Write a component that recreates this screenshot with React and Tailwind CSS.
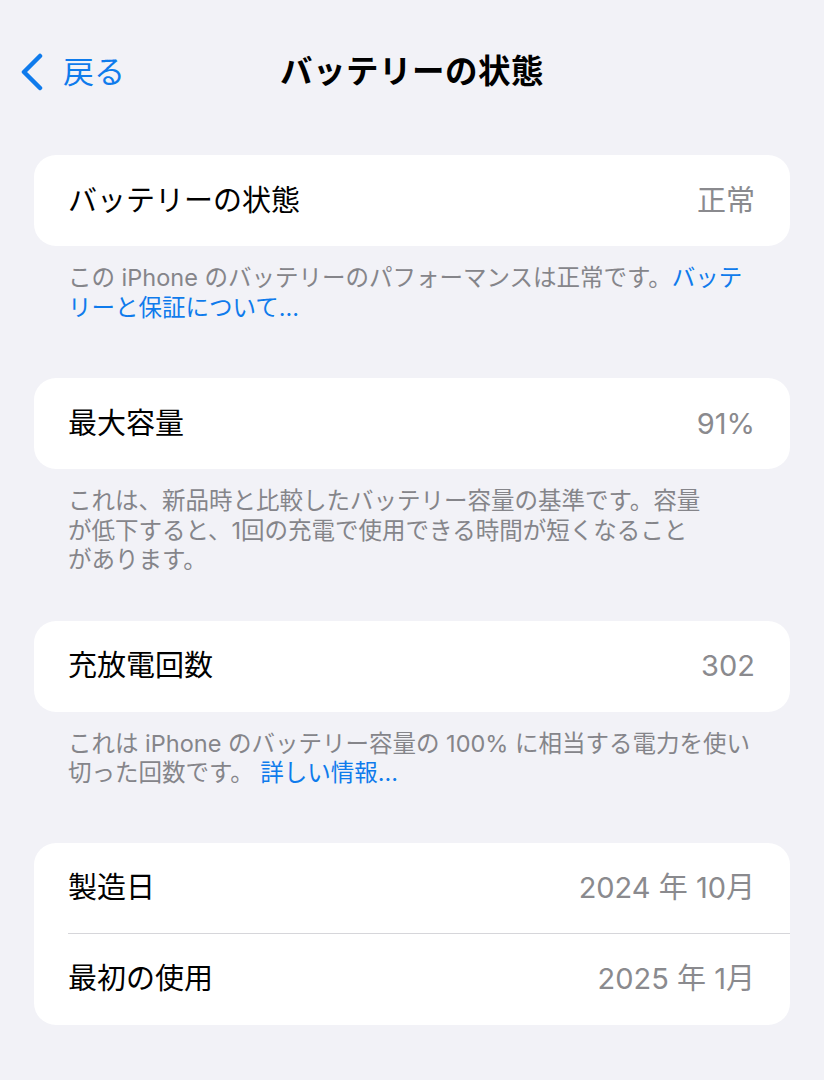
const FONT = "font-['Inter','Noto_Sans_CJK_JP',sans-serif]";

function Row({ label, value, divider }) {
  return (
    <div className="relative flex h-[91px] items-center justify-between pl-[34px] pr-[35px]">
      <span className="text-[29px] text-black">{label}</span>
      <span className="text-[29px] text-[#8a8a8e]">{value}</span>
      {divider && <div className="absolute bottom-0 left-[34px] right-0 h-px bg-[#d6d6da]" />}
    </div>
  );
}

function Footer({ children }) {
  return (
    <div className="pl-[34px] pt-[17px] text-[23.5px] leading-[29.5px] text-[#85858a] whitespace-nowrap">
      {children}
    </div>
  );
}

export default function App() {
  return (
    <div className={`min-h-[1080px] w-[824px] bg-[#f2f2f7] pt-[40px] ${FONT}`}>
      {/* nav bar */}
      <div className="relative flex h-[64px] items-center">
        <div className="flex items-center pl-[18px] text-[#0f7bec]">
          <svg width="26" height="38" viewBox="0 0 26 38" fill="none">
            <path d="M22 3 L6 19 L22 35" stroke="currentColor" strokeWidth="4.5" strokeLinecap="round" strokeLinejoin="round" />
          </svg>
          <span className="ml-[19px] text-[31px]">戻る</span>
        </div>
        <div className="absolute inset-0 flex items-center justify-center pointer-events-none">
          <span className="text-[32.5px] font-bold text-black tracking-[0.5px]">バッテリーの状態</span>
        </div>
      </div>

      <div className="px-[34px] pt-[51px]">
        <div className="rounded-[22px] bg-white">
          <Row label="バッテリーの状態" value="正常" />
        </div>
        <Footer>
          この iPhone のバッテリーのパフォーマンスは正常です。<span className="text-[#0f7bec]">バッテ</span>
          <br />
          <span className="text-[#0f7bec]">リーと保証について...</span>
        </Footer>

        <div className="mt-[56px] rounded-[22px] bg-white">
          <Row label="最大容量" value="91%" />
        </div>
        <Footer>
          これは、新品時と比較したバッテリー容量の基準です。容量
          <br />
          が低下すると、1回の充電で使用できる時間が短くなること
          <br />
          があります。
        </Footer>

        <div className="mt-[46px] rounded-[22px] bg-white">
          <Row label="充放電回数" value="302" />
        </div>
        <Footer>
          これは iPhone のバッテリー容量の 100% に相当する電力を使い
          <br />
          切った回数です。 <span className="text-[#0f7bec]">詳しい情報...</span>
        </Footer>

        <div className="mt-[55px] rounded-[22px] bg-white">
          <Row label="製造日" value="2024 年 10月" divider />
          <Row label="最初の使用" value="2025 年 1月" />
        </div>
      </div>
    </div>
  );
}
